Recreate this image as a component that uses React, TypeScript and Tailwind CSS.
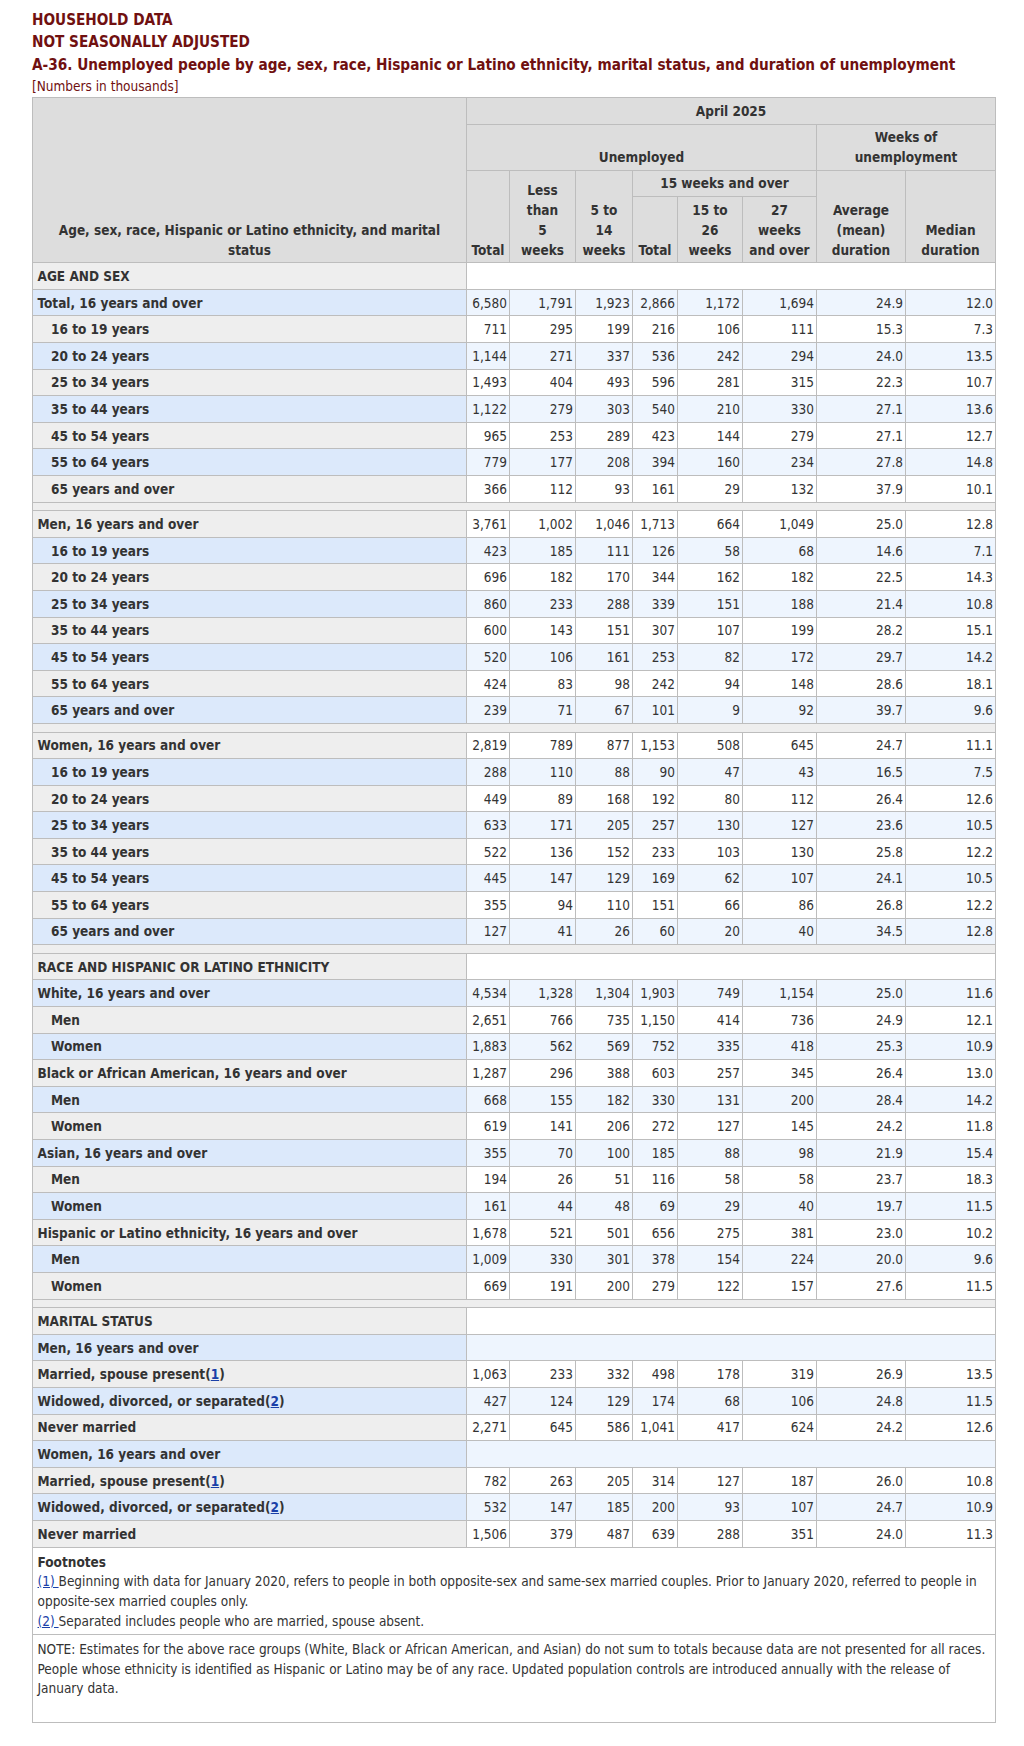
import React from "react";

type Row = { label: React.ReactNode; indent?: boolean; data?: string[] };

const FN = ({ n }: { n: number }) => (
  <>
    (<a href="#" className="text-[#1a3fa8] underline">{n}</a>)
  </>
);

const s = (t: string) => t.split(" ");

const sections: Row[][] = [
  [
    { label: "AGE AND SEX" },
    { label: "Total, 16 years and over", data: s("6,580 1,791 1,923 2,866 1,172 1,694 24.9 12.0") },
    { label: "16 to 19 years", indent: true, data: s("711 295 199 216 106 111 15.3 7.3") },
    { label: "20 to 24 years", indent: true, data: s("1,144 271 337 536 242 294 24.0 13.5") },
    { label: "25 to 34 years", indent: true, data: s("1,493 404 493 596 281 315 22.3 10.7") },
    { label: "35 to 44 years", indent: true, data: s("1,122 279 303 540 210 330 27.1 13.6") },
    { label: "45 to 54 years", indent: true, data: s("965 253 289 423 144 279 27.1 12.7") },
    { label: "55 to 64 years", indent: true, data: s("779 177 208 394 160 234 27.8 14.8") },
    { label: "65 years and over", indent: true, data: s("366 112 93 161 29 132 37.9 10.1") },
  ],
  [
    { label: "Men, 16 years and over", data: s("3,761 1,002 1,046 1,713 664 1,049 25.0 12.8") },
    { label: "16 to 19 years", indent: true, data: s("423 185 111 126 58 68 14.6 7.1") },
    { label: "20 to 24 years", indent: true, data: s("696 182 170 344 162 182 22.5 14.3") },
    { label: "25 to 34 years", indent: true, data: s("860 233 288 339 151 188 21.4 10.8") },
    { label: "35 to 44 years", indent: true, data: s("600 143 151 307 107 199 28.2 15.1") },
    { label: "45 to 54 years", indent: true, data: s("520 106 161 253 82 172 29.7 14.2") },
    { label: "55 to 64 years", indent: true, data: s("424 83 98 242 94 148 28.6 18.1") },
    { label: "65 years and over", indent: true, data: s("239 71 67 101 9 92 39.7 9.6") },
  ],
  [
    { label: "Women, 16 years and over", data: s("2,819 789 877 1,153 508 645 24.7 11.1") },
    { label: "16 to 19 years", indent: true, data: s("288 110 88 90 47 43 16.5 7.5") },
    { label: "20 to 24 years", indent: true, data: s("449 89 168 192 80 112 26.4 12.6") },
    { label: "25 to 34 years", indent: true, data: s("633 171 205 257 130 127 23.6 10.5") },
    { label: "35 to 44 years", indent: true, data: s("522 136 152 233 103 130 25.8 12.2") },
    { label: "45 to 54 years", indent: true, data: s("445 147 129 169 62 107 24.1 10.5") },
    { label: "55 to 64 years", indent: true, data: s("355 94 110 151 66 86 26.8 12.2") },
    { label: "65 years and over", indent: true, data: s("127 41 26 60 20 40 34.5 12.8") },
  ],
  [
    { label: "RACE AND HISPANIC OR LATINO ETHNICITY" },
    { label: "White, 16 years and over", data: s("4,534 1,328 1,304 1,903 749 1,154 25.0 11.6") },
    { label: "Men", indent: true, data: s("2,651 766 735 1,150 414 736 24.9 12.1") },
    { label: "Women", indent: true, data: s("1,883 562 569 752 335 418 25.3 10.9") },
    { label: "Black or African American, 16 years and over", data: s("1,287 296 388 603 257 345 26.4 13.0") },
    { label: "Men", indent: true, data: s("668 155 182 330 131 200 28.4 14.2") },
    { label: "Women", indent: true, data: s("619 141 206 272 127 145 24.2 11.8") },
    { label: "Asian, 16 years and over", data: s("355 70 100 185 88 98 21.9 15.4") },
    { label: "Men", indent: true, data: s("194 26 51 116 58 58 23.7 18.3") },
    { label: "Women", indent: true, data: s("161 44 48 69 29 40 19.7 11.5") },
    { label: "Hispanic or Latino ethnicity, 16 years and over", data: s("1,678 521 501 656 275 381 23.0 10.2") },
    { label: "Men", indent: true, data: s("1,009 330 301 378 154 224 20.0 9.6") },
    { label: "Women", indent: true, data: s("669 191 200 279 122 157 27.6 11.5") },
  ],
  [
    { label: "MARITAL STATUS" },
    { label: "Men, 16 years and over" },
    { label: <>Married, spouse present<FN n={1} /></>, data: s("1,063 233 332 498 178 319 26.9 13.5") },
    { label: <>Widowed, divorced, or separated<FN n={2} /></>, data: s("427 124 129 174 68 106 24.8 11.5") },
    { label: "Never married", data: s("2,271 645 586 1,041 417 624 24.2 12.6") },
    { label: "Women, 16 years and over" },
    { label: <>Married, spouse present<FN n={1} /></>, data: s("782 263 205 314 127 187 26.0 10.8") },
    { label: <>Widowed, divorced, or separated<FN n={2} /></>, data: s("532 147 185 200 93 107 24.7 10.9") },
    { label: "Never married", data: s("1,506 379 487 639 288 351 24.0 11.3") },
  ],
];

const B = "border border-[#bdbdbd]";
const TH = `${B} bg-[#dddddd] font-bold text-center align-bottom px-[3px] py-[2.6px]`;

export default function App() {
  return (
    <div className="bg-white text-[#333333] font-['DejaVu_Sans_Condensed','DejaVu_Sans',sans-serif] text-[13.5px] leading-[20px] pl-[32px] pt-[8.6px] pb-[21px]">
      <div className="text-[#701010] font-bold text-[15.2px] leading-[22.8px]">HOUSEHOLD DATA</div>
      <div className="text-[#701010] font-bold text-[15.2px] leading-[22.8px]">NOT SEASONALLY ADJUSTED</div>
      <div className="text-[#701010] font-bold text-[15.2px] leading-[22.8px] whitespace-nowrap">
        A-36. Unemployed people by age, sex, race, Hispanic or Latino ethnicity, marital status, and duration of unemployment
      </div>
      <div className="text-[#701010] text-[13.5px] leading-[18px] mb-[2.5px]">[Numbers in thousands]</div>
      <table className="w-[963px] table-fixed border-collapse border border-[#bdbdbd]">
        <colgroup>
          <col className="w-[434px]" />
          <col className="w-[43px]" />
          <col className="w-[66px]" />
          <col className="w-[57px]" />
          <col className="w-[45px]" />
          <col className="w-[65px]" />
          <col className="w-[74px]" />
          <col className="w-[89px]" />
          <col className="w-[90px]" />
        </colgroup>
        <thead>
          <tr>
            <th rowSpan={4} className={TH}>
              Age, sex, race, Hispanic or Latino ethnicity, and marital<br />status
            </th>
            <th colSpan={8} className={TH}>April 2025</th>
          </tr>
          <tr>
            <th colSpan={6} className={TH}>Unemployed</th>
            <th colSpan={2} className={TH}>Weeks of<br />unemployment</th>
          </tr>
          <tr>
            <th rowSpan={2} className={TH}>Total</th>
            <th rowSpan={2} className={TH}>Less<br />than<br />5<br />weeks</th>
            <th rowSpan={2} className={TH}>5 to<br />14<br />weeks</th>
            <th colSpan={3} className={TH}>15 weeks and over</th>
            <th rowSpan={2} className={TH}>Average<br />(mean)<br />duration</th>
            <th rowSpan={2} className={TH}>Median<br />duration</th>
          </tr>
          <tr>
            <th className={TH}>Total</th>
            <th className={TH}>15 to<br />26<br />weeks</th>
            <th className={TH}>27<br />weeks<br />and over</th>
          </tr>
        </thead>
        {sections.map((sec, si) => (
          <tbody key={si}>
            {si > 0 && (
              <tr>
                <td colSpan={9} className={`${B} bg-[#eeeeee] p-0 h-[8.6px]`}></td>
              </tr>
            )}
            {sec.map((r, i) => {
              const blue = i % 2 === 1;
              const lab = blue ? "bg-[#dce9fb]" : "bg-[#eeeeee]";
              const dat = blue ? "bg-[#eef5fe]" : "bg-white";
              return (
                <tr key={i}>
                  <td className={`${B} ${lab} font-bold py-[2.8px] pr-[4px] whitespace-nowrap ${r.indent ? "pl-[18px]" : "pl-[4.5px]"}`}>
                    {r.label}
                  </td>
                  {r.data ? (
                    r.data.map((d, j) => (
                      <td key={j} className={`${B} ${dat} text-right py-[2.8px] px-[2px] whitespace-nowrap`}>
                        {d}
                      </td>
                    ))
                  ) : (
                    <td colSpan={8} className={`${B} ${dat} py-[2.8px]`}></td>
                  )}
                </tr>
              );
            })}
          </tbody>
        ))}
        <tfoot>
          <tr>
            <td colSpan={9} className={`${B} bg-white px-[4.5px] pt-[5px] pb-[3px] leading-[19.7px]`}>
              <div className="font-bold">Footnotes</div>
              <div>
                <a href="#" className="text-[#1a3fa8] underline">(1) </a>Beginning with data for January 2020, refers to people in both opposite-sex and same-sex married couples. Prior to January 2020, referred to people in opposite-sex married couples only.
              </div>
              <div>
                <a href="#" className="text-[#1a3fa8] underline">(2) </a>Separated includes people who are married, spouse absent.
              </div>
            </td>
          </tr>
          <tr>
            <td colSpan={9} className={`${B} bg-white px-[4.5px] pt-[4.5px] pb-[23px] leading-[19.7px]`}>
              NOTE: Estimates for the above race groups (White, Black or African American, and Asian) do not sum to totals because data are not presented for all races. People whose ethnicity is identified as Hispanic or Latino may be of any race. Updated population controls are introduced annually with the release of January data.
            </td>
          </tr>
        </tfoot>
      </table>
    </div>
  );
}
